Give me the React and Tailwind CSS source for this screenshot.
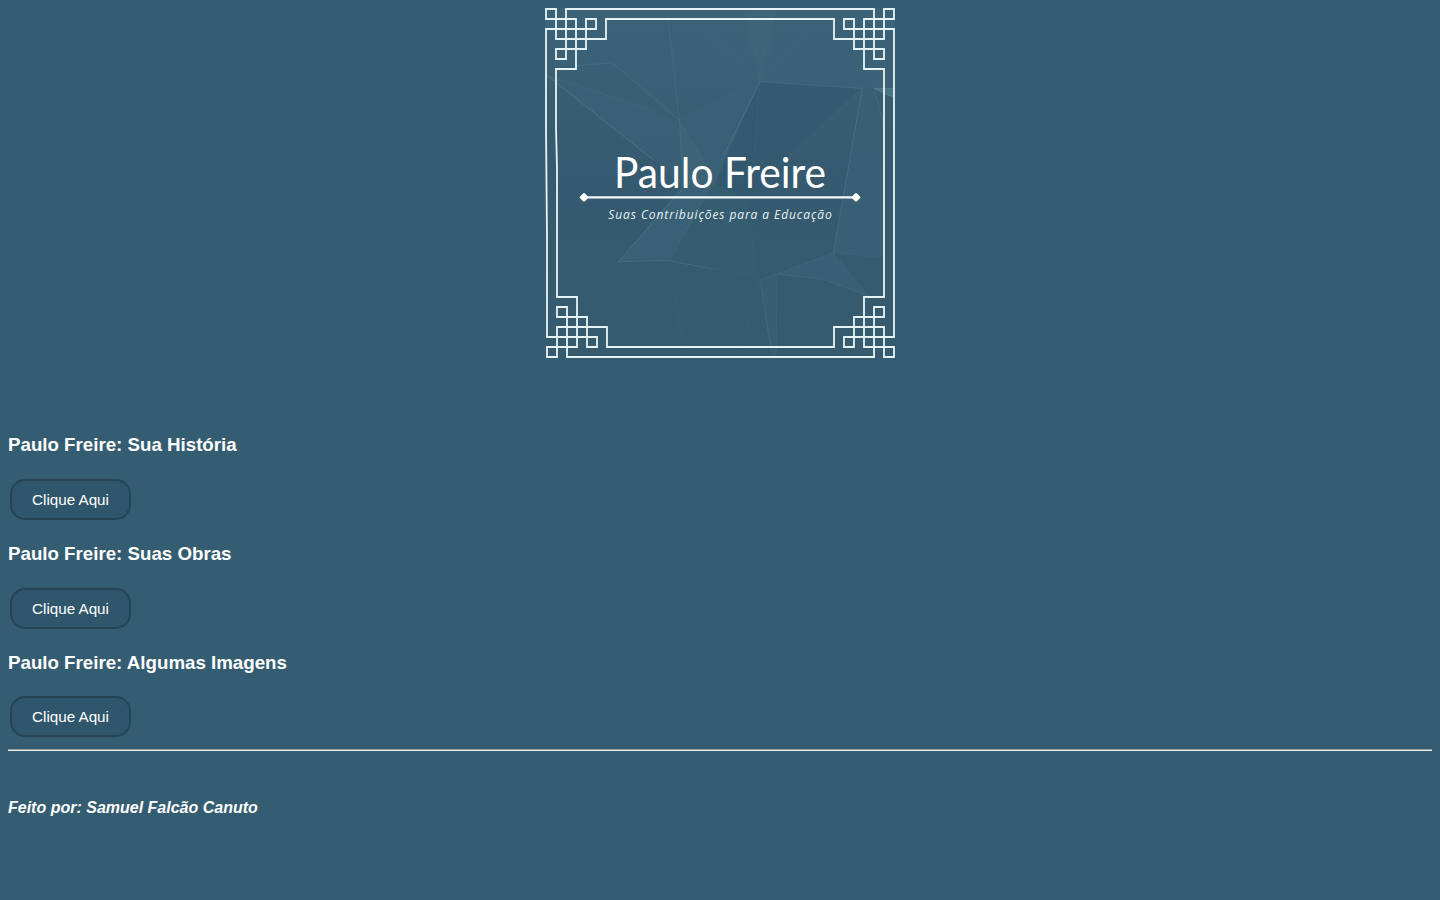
const sections = [
  { title: 'Paulo Freire: Sua História', gap: 'mt-[76px]' },
  { title: 'Paulo Freire: Suas Obras', gap: 'mt-[23px]' },
  { title: 'Paulo Freire: Algumas Imagens', gap: 'mt-[23px]', inner: 'mt-[23px]' },
];

const facets = [
  ['15,24 380,24 418,360 217,188 50,200 15,200', '#3d6378', 0.4],
  ['380,24 610,24 660,245 418,360', '#3d6377', 0.4],
  ['610,24 715,24 660,245', '#41677c', 0.6],
  ['715,24 1065,24 1065,265 965,265 660,245', '#3c6277', 0.7],
  ['20,225 345,335 418,360 425,560 340,480', '#3d6378', 0.6],
  ['20,225 345,335 418,360 217,188 100,200 15,200', '#3a6074', 0.6],
  ['418,360 595,275 660,245 525,550 490,480', '#3c6277', 0.7],
  ['418,360 490,480 525,550 425,560', '#406679', 0.7],
  ['660,245 625,600 525,550', '#33576c', 0.7],
  ['660,245 965,265 740,480 625,600', '#34596e', 0.7],
  ['965,265 1003,265 1030,370 1030,770 880,758', '#3a6074', 0.8],
  ['1003,265 1065,265 1060,292', '#4e7588', 0.8],
  ['425,560 525,550 388,782 235,785', '#3c6277', 0.8],
  ['525,550 625,600 660,840 388,782', '#375d71', 0.6],
  ['710,822 880,758 985,888 850,838', '#3b6176', 0.7],
  ['660,840 710,822 710,1072 692,1072', '#3a6074', 0.6],
];

const creases = [
  ['20,225 345,335', 0.08],
  ['20,225 340,480', 0.22],
  ['100,198 217,188 418,360', 0.14],
  ['385,60 418,360 425,480', 0.1],
  ['418,360 595,275', 0.06],
  ['418,360 490,480', 0.1],
  ['480,70 660,245 835,65', 0.05],
  ['610,60 660,245 715,60', 0.06],
  ['545,480 660,245 965,265', 0.16],
  ['660,245 640,480', 0.06],
  ['965,265 740,480', 0.08],
  ['967,265 880,758', 0.16],
  ['1003,265 1062,265', 0.2],
  ['1003,265 1060,292', 0.3],
  ['1003,265 1030,370', 0.12],
  ['425,570 235,785 388,782 520,808', 0.16],
  ['235,785 310,880', 0.05],
  ['388,782 500,580', 0.08],
  ['660,840 710,822 880,758 1020,772', 0.1],
  ['710,822 850,838 985,888', 0.12],
  ['880,758 985,888', 0.06],
  ['660,840 692,1040', 0.12],
  ['660,840 600,1060', 0.04],
  ['710,822 710,1060', 0.05],
  ['405,890 430,1040', 0.04],
];

function Emblem() {
  return (
    <svg width="350" height="350" viewBox="0 0 350 350" className="block">
      <defs>
        <linearGradient id="backdrop" x1="0" y1="0" x2="0" y2="1">
          <stop offset="0" stopColor="#3b6175" />
          <stop offset="0.5" stopColor="#355a6f" />
          <stop offset="1" stopColor="#365a6e" />
        </linearGradient>
      </defs>
      <rect width="350" height="350" fill="url(#backdrop)" />
      <g transform="translate(-5 -8) scale(0.33333)">
        {facets.map(([points, fill, opacity]) => (
          <polygon key={points} points={points} fill={fill} opacity={opacity} />
        ))}
        {creases.map(([points, opacity]) => (
          <polyline key={points} points={points} fill="none" stroke="#a4c8d8" strokeWidth="2.5" opacity={opacity} />
        ))}
      </g>
      <g fill="none" stroke="#e6f3f4" strokeWidth="1.8">
        <path d="M61 11V31H11V1H1V11H31V61H11V120L12 160V289H32V339H2V349H12V319H62V339H289V319H339V349H349V339H319V289H339V61H319V11H349V1H339V31H289V11Z" />
        <path d="M21 1V51H11V41H41V11H51V21H1V120L2 230V329H52V339H42V309H12V299H22V349H329V299H339V309H309V339H299V329H349V21H299V11H309V41H339V51H329V1Z" />
      </g>
      <path d="M39 189.4H311" stroke="#f6fcfc" strokeWidth="2.2" />
      <path
        d="M36 189.4L39 186.4L42 189.4L39 192.4ZM308 189.4L311 186.4L314 189.4L311 192.4Z"
        fill="#fff"
        stroke="#fff"
        strokeWidth="2.6"
        strokeLinejoin="round"
      />
      <text x="69" y="180" textLength="212" lengthAdjust="spacingAndGlyphs" fill="#fff" className="font-['Lato',sans-serif] text-[42px]">
        Paulo Freire
      </text>
      <text x="63.3" y="210.7" textLength="223.4" fill="#e6f1f4" className="font-['Open_Sans',sans-serif] text-[12px] italic">
        Suas Contribuições para a Educação
      </text>
    </svg>
  );
}

export default function App() {
  return (
    <main className="min-h-screen bg-[#355d72] p-2 font-['Liberation_Sans',Arial,sans-serif] text-white">
      <header className="flex justify-center">
        <Emblem />
      </header>
      {sections.map(({ title, gap, inner = 'mt-6' }) => (
        <section key={title} className={gap}>
          <h3 className="text-[18.72px] leading-[21px] font-bold">{title}</h3>
          <button
            className={`${inner} ml-0.5 block h-[41px] w-[121px] rounded-[15px] border-2 border-[#254454] bg-[#2f566b] text-[15.2px] leading-[17px]`}
          >
            Clique Aqui
          </button>
        </section>
      ))}
      <hr className="mt-3 h-0.5 border-t border-b border-t-[#9a9a9a] border-b-[#eeeeee]" />
      <footer className="mt-12 text-base leading-[18px] font-bold italic">Feito por: Samuel Falcão Canuto</footer>
    </main>
  );
}
